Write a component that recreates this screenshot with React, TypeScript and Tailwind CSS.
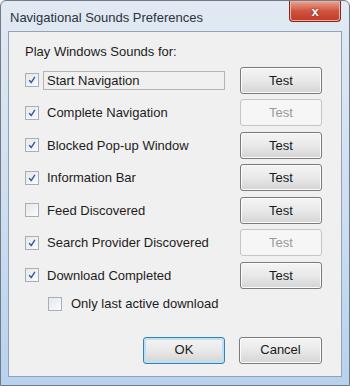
import type { ReactNode } from 'react';

const font = { fontFamily: '"Liberation Sans", Arial, sans-serif' };

function Check({ checked }: { checked: boolean }) {
  return (
    <span className="flex h-[14px] w-[14px] shrink-0 items-center justify-center border border-[#a8aeb6] bg-gradient-to-br from-[#e6e8ec] to-[#fbfbfc]">
      {checked && (
        <svg width="10" height="10" viewBox="0 0 10 10">
          <path d="M2.5 5.5 L4.2 7.6 L7.6 2.4" fill="none" stroke="#3a5ea8" strokeWidth="1.5" strokeLinecap="round" strokeLinejoin="round" />
        </svg>
      )}
    </span>
  );
}

function Button({ children, disabled, primary, wide }: { children: ReactNode; disabled?: boolean; primary?: boolean; wide?: boolean }) {
  if (disabled) {
    return (
      <div className="flex h-[27px] w-[82px] items-center justify-center rounded-[3px] border border-[#c2c5c9] bg-[#f6f6f6] text-[13px] text-[#9a9a9a]">
        {children}
      </div>
    );
  }
  return (
    <div
      className={
        'flex h-[27px] items-center justify-center rounded-[3px] border bg-gradient-to-b from-[#f4f4f4] via-[#e9e9e9] to-[#d4d4d4] text-[13px] text-[#1a1a1a] ' +
        (primary ? 'border-[#3c7fb1] shadow-[inset_0_0_0_2px_#b9e2f7] ' : 'border-[#7a7a7a] shadow-[inset_0_0_0_1px_#fcfcfc] ') +
        (wide ? 'w-[83px]' : 'w-[82px]')
      }
    >
      {children}
    </div>
  );
}

const rows = [
  { label: 'Start Navigation', checked: true, enabled: true, focus: true },
  { label: 'Complete Navigation', checked: true, enabled: false },
  { label: 'Blocked Pop-up Window', checked: true, enabled: true },
  { label: 'Information Bar', checked: true, enabled: true },
  { label: 'Feed Discovered', checked: false, enabled: true },
  { label: 'Search Provider Discovered', checked: true, enabled: false },
  { label: 'Download Completed', checked: true, enabled: true },
];

export default function App() {
  return (
    <div
      className="flex h-[386px] w-[350px] flex-col rounded-t-[6px] border border-[#6f7b88] bg-gradient-to-b from-[#e2e9f2] via-[#cfdff0] to-[#b8d2ee] px-[7px] pb-[8px]"
      style={font}
    >
      {/* title bar */}
      <div className="flex h-[30px] shrink-0 items-start justify-between">
        <div className="pl-[2px] pt-[8px] text-[13px] leading-[18px] text-[#2a3340]">Navigational Sounds Preferences</div>
        <div className="mr-[1px] flex h-[21px] w-[52px] items-center justify-center rounded-b-[4px] border border-t-0 border-[#7a2a22] bg-gradient-to-b from-[#e9a392] via-[#d0533f] to-[#c23a26] shadow-[inset_0_0_0_1px_#f0b0a0]">
          <span className="text-[13px] font-bold leading-none text-white [text-shadow:0_0_2px_#5a1810]">x</span>
        </div>
      </div>

      {/* client */}
      <div className="flex flex-1 flex-col border border-[#93a2b4] bg-[#f0f0f0] pl-[16px] pr-[19px] pt-[11px] text-[13px] text-[#1c1c1c]">
        <div className="h-[18px] leading-[18px]">Play Windows Sounds for:</div>
        <div className="mt-[3px] flex flex-col">
          {rows.map((r) => (
            <div key={r.label} className="flex h-[32.5px] items-center">
              <Check checked={r.checked} />
              <div
                className={
                  'ml-[4px] flex h-[19px] w-[182px] items-center px-[3px] leading-none ' +
                  (r.focus ? 'border border-[#b4b4b4]' : 'border border-transparent')
                }
              >
                {r.label}
              </div>
              <div className="ml-auto">
                <Button disabled={!r.enabled}>Test</Button>
              </div>
            </div>
          ))}
        </div>
        <div className="ml-[23px] mt-[-2px] flex h-[28px] items-center">
          <Check checked={false} />
          <span className="ml-[9px]">Only last active download</span>
        </div>
        <div className="mt-[19px] flex justify-end gap-[14px]">
          <Button primary>OK</Button>
          <Button wide>Cancel</Button>
        </div>
      </div>
    </div>
  );
}
